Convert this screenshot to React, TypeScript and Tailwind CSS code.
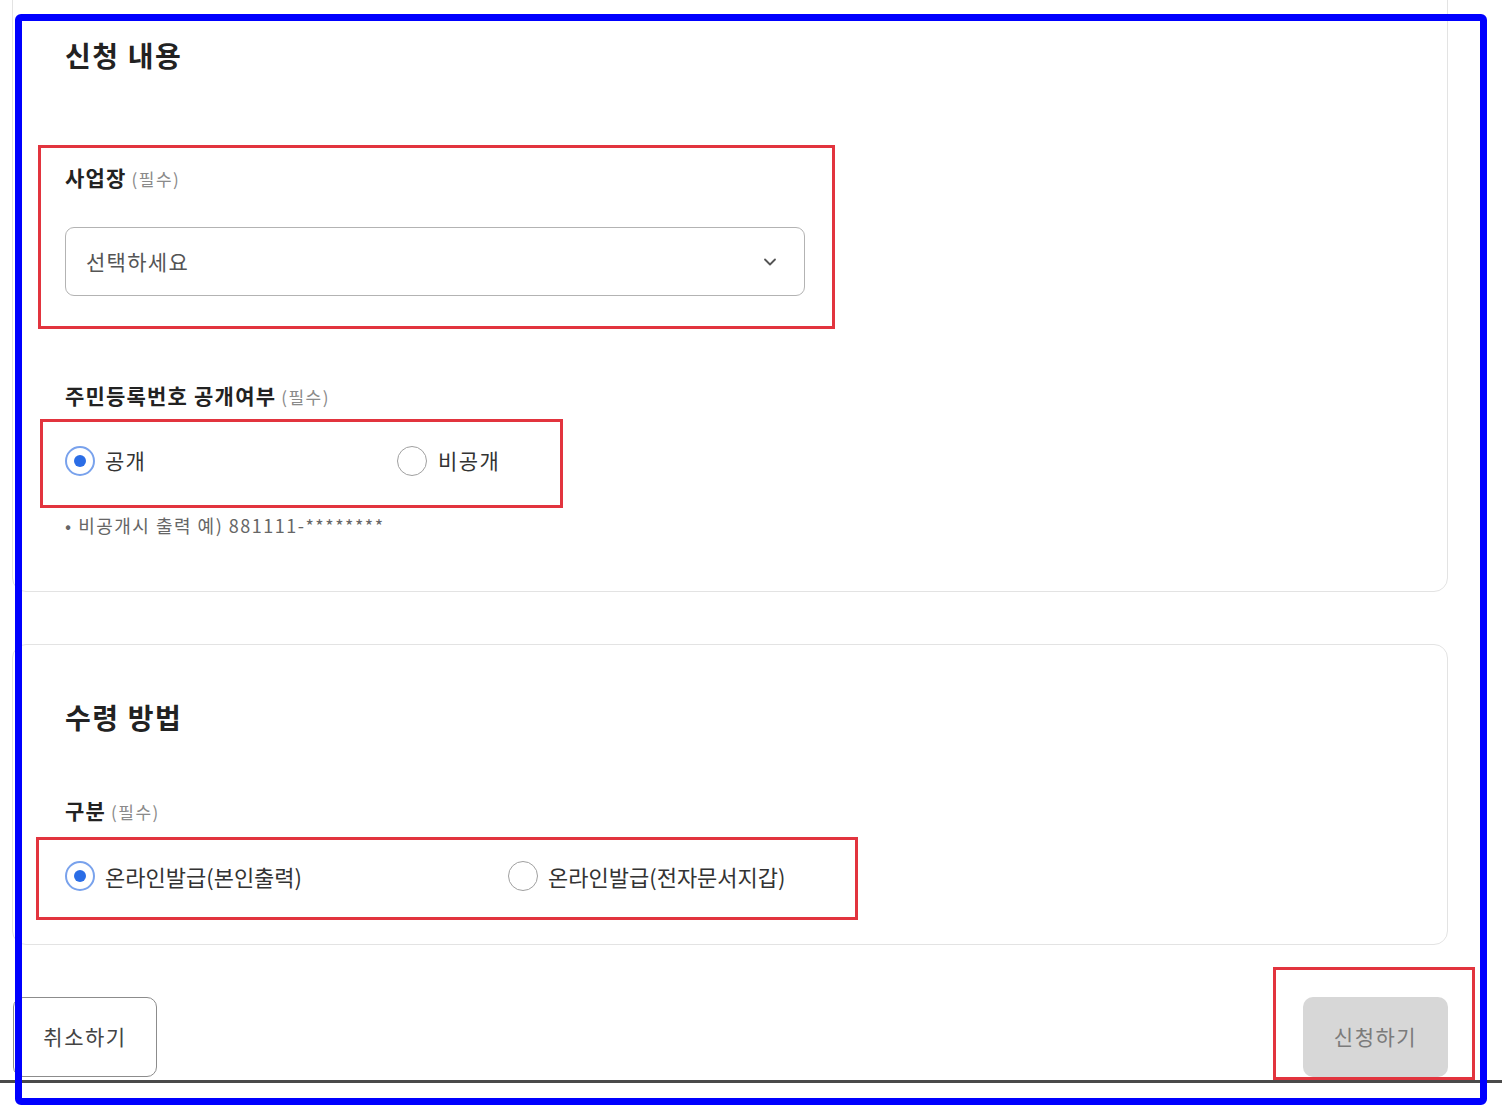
import { ChevronDown } from 'lucide-react'

const font = "font-['Noto_Sans_CJK_KR','Noto_Sans',sans-serif]"

function Radio({ checked }: { checked?: boolean }) {
  if (checked) {
    return (
      <span className="w-[30px] h-[30px] shrink-0 rounded-full border-2 border-[#79a2ec] flex items-center justify-center bg-white">
        <span className="w-[12px] h-[12px] rounded-full bg-[#2b6de6]" />
      </span>
    )
  }
  return <span className="w-[30px] h-[30px] shrink-0 rounded-full border-[1.5px] border-[#a0a0a0] bg-white" />
}

function Required() {
  return <span className="ml-[5px] text-[17px] leading-[18px] font-normal tracking-[1.5px] text-[#8a8a8a]">(필수)</span>
}

export default function App() {
  return (
    <div className={`relative w-[1502px] h-[1120px] overflow-hidden bg-white ${font}`}>
      <div className="pl-[12px] pr-[54px]">
        {/* 신청 내용 */}
        <section className="-mt-[30px] border border-[#e3e3e3] rounded-[14px] px-[52px] pt-[64px] pb-[54px]">
          <h2 className="text-[28px] leading-[40px] font-bold tracking-[1.6px] text-[#222]">신청 내용</h2>

          <div className="mt-[70px] -ml-[27px] w-[797px] border-[3px] border-[#e2343e] pt-[15px] pb-[30px] pl-[24px]">
            <div className="text-[21px] leading-[28px] font-bold tracking-[1.2px] text-[#222]">
              사업장
              <Required />
            </div>
            <div className="mt-[36px] w-[740px] h-[69px] rounded-[9px] border-[1.5px] border-[#b3b3b3] flex items-center justify-between pl-[20px] pr-[24px]">
              <span className="text-[21px] tracking-[1.3px] text-[#555]">선택하세요</span>
              <ChevronDown className="w-[20px] h-[20px] text-[#555]" strokeWidth={2.2} />
            </div>
          </div>

          <div className="mt-[52px] text-[21px] leading-[28px] font-bold tracking-[1.2px] text-[#222]">
            주민등록번호 공개여부
            <Required />
          </div>
          <div className="mt-[10px] -ml-[25px] w-[523px] h-[89px] border-[3px] border-[#e2343e] pl-[22px] pb-[5px] flex items-center">
            <label className="w-[332px] flex items-center gap-[10px]">
              <Radio checked />
              <span className="text-[21px] tracking-[1.2px] text-[#333]">공개</span>
            </label>
            <label className="flex items-center gap-[11px]">
              <Radio />
              <span className="text-[21px] tracking-[1.4px] text-[#333]">비공개</span>
            </label>
          </div>
          <p className="mt-[5px] text-[18px] leading-[24px] tracking-[1.5px] text-[#666]">• 비공개시 출력 예) 881111-********</p>
        </section>

        {/* 수령 방법 */}
        <section className="mt-[52px] border border-[#e3e3e3] rounded-[14px] px-[52px] pt-[52px] pb-[24px]">
          <h2 className="text-[28px] leading-[40px] font-bold tracking-[1.6px] text-[#222]">수령 방법</h2>
          <div className="mt-[59px] text-[21px] leading-[28px] font-bold tracking-[1.2px] text-[#222]">
            구분
            <Required />
          </div>
          <div className="mt-[13px] -ml-[29px] w-[822px] h-[83px] border-[3px] border-[#e2343e] pl-[26px] pb-[5px] flex items-center">
            <label className="w-[443px] flex items-center gap-[10px]">
              <Radio checked />
              <span className="text-[22px] text-[#333]">온라인발급(본인출력)</span>
            </label>
            <label className="flex items-center gap-[10px]">
              <Radio />
              <span className="text-[22px] text-[#333]">온라인발급(전자문서지갑)</span>
            </label>
          </div>
        </section>

        {/* buttons */}
        <div className="mt-[22px] flex items-end justify-between">
          <button className="ml-[1px] mb-[3px] w-[144px] h-[80px] rounded-[10px] border-[1.5px] border-[#8c8c8c] bg-white text-[21px] tracking-[1.5px] text-[#444]">
            취소하기
          </button>
          <div className="-mr-[27px] w-[202px] h-[113px] border-[3px] border-[#e2343e] pt-[27px] pl-[27px]">
            <button className="w-[145px] h-[80px] rounded-[10px] bg-[#d7d7d7] text-[21px] tracking-[1.5px] text-[#7b7b7b]">
              신청하기
            </button>
          </div>
        </div>
      </div>
      <div className="h-[3px] w-full bg-[#4a4a4a]" />

      {/* annotation frame */}
      <div className="absolute left-[15px] top-[14px] w-[1472px] h-[1091px] border-[7px] border-[#0000ff] rounded-[6px] pointer-events-none" />
    </div>
  )
}
